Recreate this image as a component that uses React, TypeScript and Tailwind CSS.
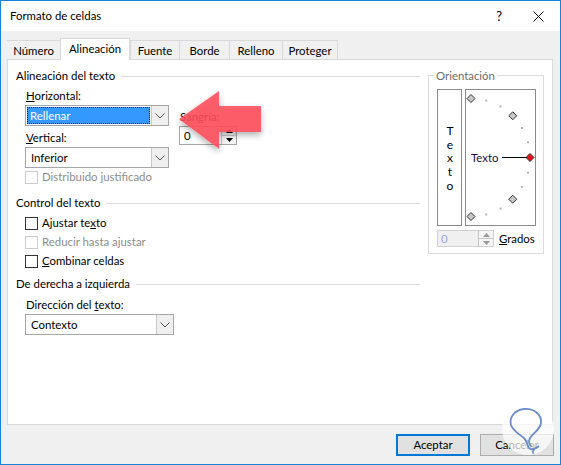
import React from "react";

const font = "[font-family:Lato,'Noto_Sans',sans-serif]";

function Chevron() {
  return (
    <svg width="10" height="6" viewBox="0 0 10 6">
      <path d="M0.5 0.5 L5 5 L9.5 0.5" fill="none" stroke="#555" strokeWidth="1" />
    </svg>
  );
}

function Select({ value, width, focused }: { value: string; width: string; focused?: boolean }) {
  return (
    <div className={`flex h-[21px] ${width} border border-[#a6a6a6] bg-white`}>
      <div className="flex flex-1 items-center p-[1px]">
        {focused ? (
          <div className="flex h-full w-full items-center border border-dotted border-[#1a1a1a] bg-[#3399ff] pl-[2px] text-white">
            {value}
          </div>
        ) : (
          <span className="pl-[4px]">{value}</span>
        )}
      </div>
      <div className="flex w-[17px] items-center justify-center border-l border-[#c8c8c8] bg-[#efefef]">
        <Chevron />
      </div>
    </div>
  );
}

function Spinner({ disabled }: { disabled?: boolean }) {
  const c = disabled ? "#9a9a9a" : "#000";
  return (
    <div className="flex w-[15px] flex-col border-l border-[#c8c8c8] bg-[#f4f4f4]">
      <div className="flex flex-1 items-center justify-center border-b border-[#c8c8c8]">
        <svg width="7" height="4" viewBox="0 0 7 4">
          <path d="M0 4 L3.5 0 L7 4 Z" fill={c} />
        </svg>
      </div>
      <div className="flex flex-1 items-center justify-center">
        <svg width="7" height="4" viewBox="0 0 7 4">
          <path d="M0 0 L3.5 4 L7 0 Z" fill={c} />
        </svg>
      </div>
    </div>
  );
}

function Check({ label, disabled }: { label: React.ReactNode; disabled?: boolean }) {
  return (
    <div className="flex h-[16px] items-center">
      <div className={`h-[13px] w-[13px] border ${disabled ? "border-[#cccccc]" : "border-[#333333]"} bg-white`} />
      <span className={`ml-[4px] ${disabled ? "text-[#8d8d8d]" : "text-black"}`}>{label}</span>
    </div>
  );
}

function Heading({ text }: { text: string }) {
  return (
    <div className="flex h-[16px] items-center">
      <span>{text}</span>
      <div className="ml-[6px] h-px flex-1 bg-[#dcdcdc]" />
    </div>
  );
}

function Dial() {
  const cx = 5;
  const cy = 67.5;
  const r = 59;
  const pts = [-90, -75, -60, -45, -30, -15, 0, 15, 30, 45, 60, 75, 90];
  return (
    <svg width="69" height="135" viewBox="0 0 69 135">
      {pts.map((a) => {
        const rad = (a * Math.PI) / 180;
        const x = cx + r * Math.cos(rad);
        const y = cy + r * Math.sin(rad);
        if (a % 45 === 0) {
          const red = a === 0;
          return (
            <path
              key={a}
              d={`M${x} ${y - 4} L${x + 4} ${y} L${x} ${y + 4} L${x - 4} ${y} Z`}
              fill={red ? "#e8101a" : "#c8c8c8"}
              stroke="#333"
              strokeWidth="1"
            />
          );
        }
        return <rect key={a} x={x - 1} y={y - 1} width="2" height="2" fill="#b4b4b4" />;
      })}
      <line x1="36" y1={cy} x2="61" y2={cy} stroke="#000" strokeWidth="1" />
    </svg>
  );
}

export default function App() {
  const tabs = [
    { t: "Número", w: "w-[53px]" },
    { t: "Alineación", w: "w-[70px]", sel: true },
    { t: "Fuente", w: "w-[49px]" },
    { t: "Borde", w: "w-[50px]" },
    { t: "Relleno", w: "w-[53px]" },
    { t: "Proteger", w: "w-[56px]", last: true },
  ];
  return (
    <div className={`relative flex h-[465px] w-[561px] flex-col border border-[#1883d7] bg-[#f0f0f0] text-[11.4px] leading-[16px] text-black ${font}`}>
      {/* title bar */}
      <div className="flex h-[30px] items-center bg-white pl-[9px] pr-[16px]">
        <span className="text-[11.4px]">Formato de celdas</span>
        <span className="ml-auto text-[13px]">?</span>
        <svg className="ml-[31px]" width="11" height="11" viewBox="0 0 11 11">
          <path d="M0.5 0.5 L10.5 10.5 M10.5 0.5 L0.5 10.5" stroke="#111" strokeWidth="1" />
        </svg>
      </div>

      <div className="flex flex-1 flex-col pl-[6px] pt-[7px]">
        {/* tabs */}
        <div className="flex h-[21px] items-end">
          {tabs.map((tab) =>
            tab.sel ? (
              <div
                key={tab.t}
                className={`relative z-10 mb-[-1px] flex h-[22px] ${tab.w} items-center justify-center border-x border-t border-[#d9d9d9] bg-white pb-[2px]`}
              >
                {tab.t}
              </div>
            ) : (
              <div
                key={tab.t}
                className={`flex h-[19px] ${tab.w} items-center justify-center border-t border-[#d9d9d9] ${tab.last ? "border-r" : ""} ${tab.t === "Número" ? "" : "border-l"} bg-[#f0f0f0] pt-[1px]`}
              >
                {tab.t}
              </div>
            )
          )}
        </div>

        {/* panel */}
        <div className="flex h-[366px] w-[546px] border border-[#d9d9d9] bg-white pl-[8px]">
          {/* left column */}
          <div className="flex w-[404px] flex-col pt-[8px]">
            <Heading text="Alineación del texto" />
            <div className="mt-[4px] flex pl-[9px]">
              <div className="flex w-[144px] flex-col">
                <span className="ml-px">
                  <u>H</u>orizontal:
                </span>
                <div className="mt-px">
                  <Select value="Rellenar" width="w-[144px]" focused />
                </div>
                <span className="ml-px mt-[4px]">
                  <u>V</u>ertical:
                </span>
                <div className="mt-px">
                  <Select value="Inferior" width="w-[144px]" />
                </div>
              </div>
              <div className="ml-[10px] flex flex-col pt-[21px]">
                <span className="ml-px">Sangría:</span>
                <div className="mt-px flex h-[19px] w-[58px] border border-[#a6a6a6] bg-white">
                  <span className="flex-1 pl-[4px] leading-[17px]">0</span>
                  <Spinner />
                </div>
              </div>
            </div>
            <div className="mt-px pl-[9px]">
              <Check label="Distribuido justificado" disabled />
            </div>

            <div className="mt-[10px]">
              <Heading text="Control del texto" />
            </div>
            <div className="mt-[4px] flex flex-col gap-[3px] pl-[9px]">
              <Check
                label={
                  <>
                    Ajustar te<u>x</u>to
                  </>
                }
              />
              <Check label="Reducir hasta ajustar" disabled />
              <Check
                label={
                  <>
                    <u>C</u>ombinar celdas
                  </>
                }
              />
            </div>

            <div className="mt-[7px]">
              <Heading text="De derecha a izquierda" />
            </div>
            <div className="mt-[5px] flex flex-col pl-[9px]">
              <span className="ml-px">
                Dirección del <u>t</u>exto:
              </span>
              <div className="mt-px">
                <Select value="Contexto" width="w-[149px]" />
              </div>
            </div>
          </div>

          {/* orientation */}
          <div className="ml-[8px] mt-[15px] flex h-[179px] w-[116px] flex-col border border-[#dcdcdc] pl-[8px] pt-[13px]">
            <span className="absolute mt-[-21px] ml-[-3px] bg-white px-[2px] text-[#6d6d6d]">Orientación</span>
            <div className="flex gap-[3px]">
              <div className="flex h-[137px] w-[25px] items-center justify-center border border-[#8a8a8a]">
                <span className="text-[12px] leading-[12px] tracking-[-1.3px] [text-orientation:upright] [writing-mode:vertical-lr]">Texto</span>
              </div>
              <div className="relative h-[137px] w-[71px] border border-[#8a8a8a]">
                <Dial />
                <span className="absolute left-[5px] top-[60px] text-[#1a1440]">Texto</span>
              </div>
            </div>
            <div className="mt-[4px] flex items-center">
              <div className="flex h-[17px] w-[57px] border border-[#d0d0d0] bg-[#f0f0f0]">
                <span className="flex-1 pl-[3px] leading-[15px] text-[#8aaee0]">0</span>
                <Spinner disabled />
              </div>
              <span className="ml-[5px]">
                <u>G</u>rados
              </span>
            </div>
          </div>
        </div>

        {/* buttons */}
        <div className="mt-[9px] flex w-[547px] justify-end gap-[10px]">
          <button className="h-[22px] w-[74px] border-2 border-[#0078d7] bg-[#e1e1e1]">Aceptar</button>
          <button className="h-[22px] w-[74px] border border-[#adadad] bg-[#e1e1e1]">Cancelar</button>
        </div>
      </div>

      {/* red arrow overlay */}
      <svg className="pointer-events-none absolute left-[170px] top-[84px]" width="100" height="74" viewBox="0 0 100 74">
        <defs>
          <filter id="sh" x="-20%" y="-20%" width="140%" height="150%">
            <feDropShadow dx="0" dy="3" stdDeviation="3" floodColor="#000" floodOpacity="0.35" />
          </filter>
        </defs>
        <path d="M8 34 L48 6 L48 21 L90 21 L90 47 L48 47 L48 64 Z" fill="#ff4f5a" fillOpacity="0.88" filter="url(#sh)" />
      </svg>

      {/* watermark */}
      <svg className="pointer-events-none absolute left-[499px] top-[401px]" width="56" height="56" viewBox="0 0 56 56">
        <circle cx="28" cy="27" r="26" fill="#ffffff" fillOpacity="0.7" />
        <path
          d="M24 7 C14 8 9 16 11 23 C13 29 19 32 24 36 C27 39 27 43 29 46 C31 49 37 46 39 44 C35 46 32 48 33 51 M24 7 C33 6 42 12 41 21 C40 28 33 31 30 36 C28 40 30 43 31 44"
          fill="none"
          stroke="#6a8cc8"
          strokeWidth="1.8"
          strokeLinecap="round"
        />
      </svg>
    </div>
  );
}
